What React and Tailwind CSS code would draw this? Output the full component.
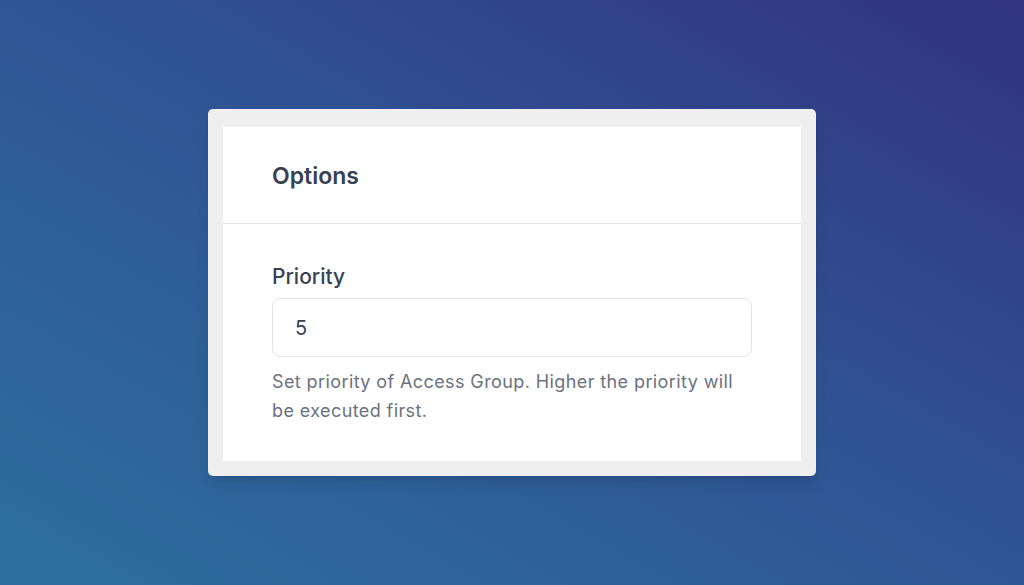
import React from 'react'

export default function App(){
  return (
    <div className="w-full h-[585px] flex items-center justify-center bg-[linear-gradient(to_top_right,#2c6f9e_0%,#2f5694_50%,#32337e_100%)]" style={{fontFamily: 'Inter, "Noto Sans", sans-serif'}}>
      <div className="w-[608px] bg-[#efefef] rounded-[5px] pt-[18px] px-[15px] pb-[15px] shadow-lg">
        <div className="bg-white">
          <div className="h-[97px] flex items-center px-[49px] border-b border-[#e5e7eb]">
            <h2 className="text-[23px] font-semibold text-[#374151] pt-[2px]">Options</h2>
          </div>
          <div className="px-[49px] pt-[39px] pb-[36px]">
            <label className="block text-[21px] leading-[28px] font-medium text-[#374151]">Priority</label>
            <div className="mt-[7px] h-[59px] border border-[#e2e4e8] rounded-[8px] flex items-center px-[22px] text-[20px] text-[#374151]">5</div>
            <p className="mt-[10px] max-w-[466px] text-[18px] leading-[29px] tracking-[0.4px] text-[#6b7280]">Set priority of Access Group. Higher the priority will be executed first.</p>
          </div>
        </div>
      </div>
    </div>
  )
}
